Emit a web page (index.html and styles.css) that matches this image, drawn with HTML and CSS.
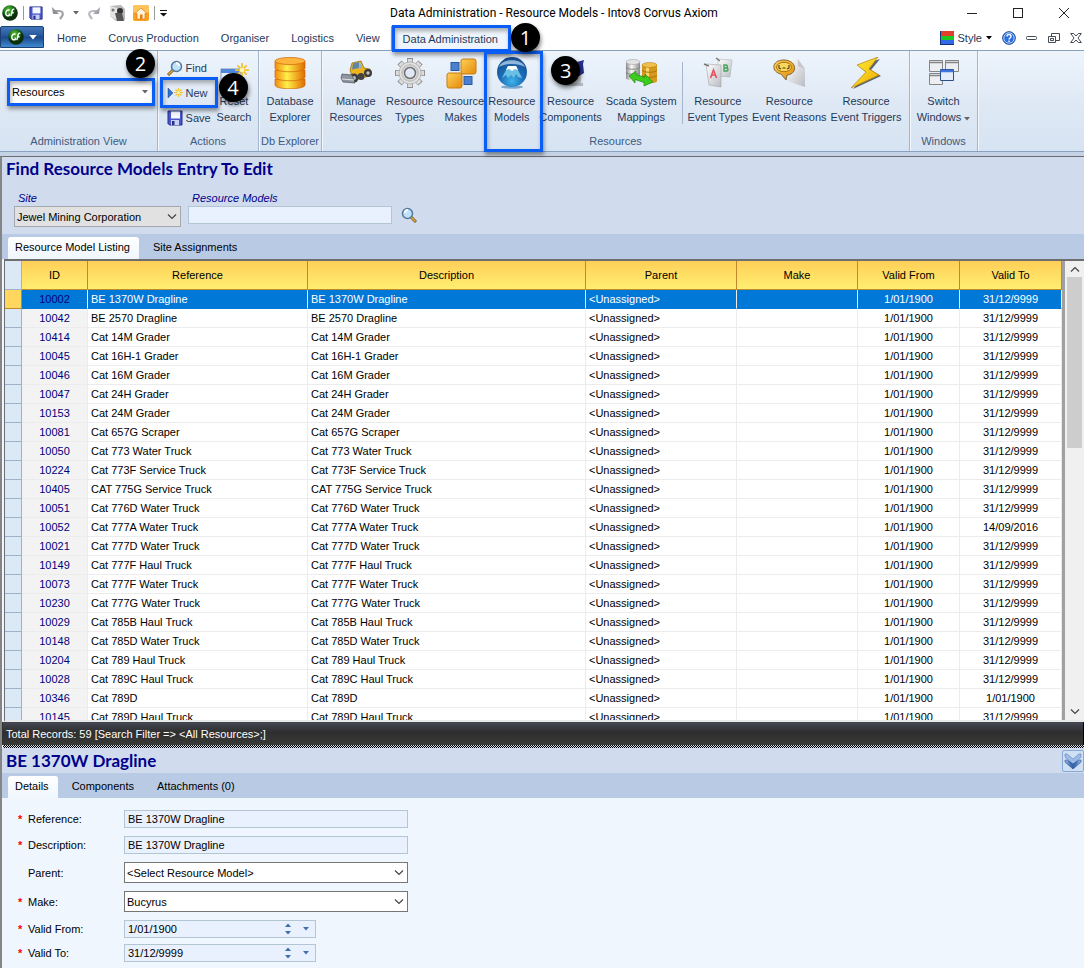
FILE: index.html
```html
<!DOCTYPE html>
<html lang="en">
<head>
    <meta charset="UTF-8">
    <meta name="viewport" content="width=device-width, initial-scale=1.0">
    <title>Data Administration - Resource Models - Intov8 Corvus Axiom</title>
    <link rel="stylesheet" href="styles.css">
</head>
<body>
    <!-- shared gradients and symbols -->
    <svg class="defs" aria-hidden="true">
        <defs>
            <radialGradient id="greenBall" cx="0.4" cy="0.3"><stop offset="0" stop-color="#6cc43c"/><stop offset="0.6" stop-color="#1c7a1c"/><stop offset="1" stop-color="#0a2e0a"/></radialGradient>
            <radialGradient id="blueBall" cx="0.5" cy="0.8" r="0.8"><stop offset="0" stop-color="#3fb4ea"/><stop offset="0.5" stop-color="#1a6bb4"/><stop offset="1" stop-color="#164a8c"/></radialGradient>
            <linearGradient id="gold" x1="0" x2="1"><stop offset="0" stop-color="#f28a10"/><stop offset="0.4" stop-color="#fff04a"/><stop offset="1" stop-color="#e06c00"/></linearGradient>
            <linearGradient id="amber" x1="0" y1="0" x2="1" y2="1"><stop offset="0" stop-color="#ffd05a"/><stop offset="1" stop-color="#e58a08"/></linearGradient>
            <linearGradient id="steel" x1="0" x2="1"><stop offset="0" stop-color="#8c8c8c"/><stop offset="0.4" stop-color="#fafafa"/><stop offset="1" stop-color="#8a8a8a"/></linearGradient>
            <linearGradient id="bolt" x1="0" y1="0" x2="1" y2="1"><stop offset="0" stop-color="#fff43a"/><stop offset="1" stop-color="#f0a800"/></linearGradient>
            <linearGradient id="paper" x1="0" y1="0" x2="1" y2="1"><stop offset="0" stop-color="#ffffff"/><stop offset="1" stop-color="#b9bcc2"/></linearGradient>
            <linearGradient id="chev" x1="0" y1="0" x2="0" y2="1"><stop offset="0" stop-color="#9dbbe6"/><stop offset="1" stop-color="#1d4a94"/></linearGradient>
        </defs>
        <symbol id="ball" viewBox="0 0 16 16">
            <circle cx="8" cy="8" r="7.8" fill="url(#greenBall)"/>
            <path d="M7.6 5.2C5.6 4.4 3.8 6 3.8 8.2c0 2 1.4 3.1 3.4 2.4V8.4M8.8 11.2l1.5-6c.3-1 1-1.2 2-.9M9.2 7.8h2.4" fill="none" stroke="#fff" stroke-width="1.4"/>
        </symbol>
        <symbol id="floppy" viewBox="0 0 16 16">
            <path d="M1 1h14v14H2.5L1 13.500z" fill="#4a58cc" stroke="#232c86"/>
            <rect x="4" y="1.500" width="9" height="7" fill="#f4f7fd"/>
            <rect x="4" y="10" width="8" height="5" fill="#c9cff0"/>
            <rect x="5" y="11" width="2.500" height="4" fill="#232c86"/>
        </symbol>
        <symbol id="lens" viewBox="0 0 16 16">
            <path d="M10 10l5 5" stroke="#7a5a20" stroke-width="3"/>
            <path d="M10 10l4.500 4.500" stroke="#e2a83c" stroke-width="1.500"/>
            <circle cx="6.500" cy="6.500" r="5" fill="#bfe2fa" stroke="#55789c" stroke-width="1.500"/>
            <path d="M4 6a3 3 0 0 1 3-3" stroke="#fff" stroke-width="2" fill="none"/>
        </symbol>
        <symbol id="spark" viewBox="0 0 12 12">
            <path d="M6 0v12M0 6h12M2 2l8 8M10 2l-8 8" stroke="#f2c230" stroke-width="1.500"/>
            <circle cx="6" cy="6" r="2" fill="#fff6b0"/>
        </symbol>
        <symbol id="caret" viewBox="0 0 10 6"><path d="M1 .5l4 4 4-4" fill="none" stroke="#444" stroke-width="1.200"/></symbol>
        <symbol id="tri" viewBox="0 0 6 4"><path d="M0 0h6L3 3.500z" fill="currentColor"/></symbol>
    </svg>

    <header class="titlebar">
        <div class="quick">
            <svg class="i16"><use href="#ball"/></svg>
            <i class="bar"></i>
            <button aria-label="Save"><svg class="i14"><use href="#floppy"/></svg></button>
            <button aria-label="Undo"><svg width="14" height="14" viewBox="0 0 14 14"><path d="M4 5h4c3 0 4.500 1.500 3.500 4.500L9 13" fill="none" stroke="#a0a2a8" stroke-width="2.200"/><path d="M1 1l1 7h6z" fill="#8e9096"/></svg></button>
            <svg class="tri grey"><use href="#tri"/></svg>
            <button aria-label="Redo"><svg width="14" height="14" viewBox="0 0 14 14"><path d="M10 5H6C3 5 1.500 6.500 2.500 9.500L5 13" fill="none" stroke="#b8babf" stroke-width="2.200"/><path d="M13 1l-1 7H6z" fill="#a2a4aa"/></svg></button>
            <button aria-label="Snapshot"><svg width="16" height="16" viewBox="0 0 16 16"><path d="M1 1l11-1 4 4v11l-9 1-6-5z" fill="#b9b9b9"/><path d="M1 1l7 2v12l-7-4z" fill="#e4e4e4"/><circle cx="11" cy="6" r="3" fill="#333"/><path d="M6 8h7l2 8H8z" fill="#555"/><circle cx="4" cy="5" r="1.500" fill="#777"/></svg></button>
            <button aria-label="Home page"><svg width="16" height="16" viewBox="0 0 16 16"><rect width="16" height="16" rx="2" fill="#f9a11b"/><rect width="16" height="8" rx="2" fill="#fcc45c"/><path d="M8 3L2 8.500h2V14h8V8.500h2z" fill="#fff3dc" stroke="#e77a10" stroke-width=".7"/><rect x="7" y="9.500" width="2.500" height="4.500" fill="#e77a10"/></svg></button>
            <i class="bar"></i>
            <svg class="more" width="8" height="7" viewBox="0 0 8 7"><path d="M0 .5h7" stroke="#111"/><path d="M0 3h7L3.500 6.500z" fill="#111"/></svg>
        </div>
        <h1 class="caption">Data Administration - Resource Models - Intov8 Corvus Axiom</h1>
        <div class="window-buttons">
            <button aria-label="Minimize"><svg width="10" height="10"><path d="M0 5.500h10" stroke="#222"/></svg></button>
            <button aria-label="Maximize"><svg width="10" height="10"><rect x=".5" y=".5" width="9" height="9" fill="none" stroke="#222"/></svg></button>
            <button aria-label="Close"><svg width="10" height="10"><path d="M0 0l10 10M10 0L0 10" stroke="#222"/></svg></button>
        </div>
    </header>

    <nav class="menubar">
        <button class="app-button" aria-label="Application menu"><svg class="i16"><use href="#ball"/></svg><svg class="app-tri"><use href="#tri"/></svg></button>
        <button class="menu">Home</button>
        <button class="menu">Corvus Production</button>
        <button class="menu">Organiser</button>
        <button class="menu">Logistics</button>
        <button class="menu">View</button>
        <button class="menu active">Data Administration<span class="callout"></span><span class="badge badge-1">1</span></button>
        <div class="menu-right">
            <button class="style-button"><svg width="14" height="14"><rect width="14" height="14" fill="#16307a"/><rect x="1" width="13" height="5" fill="#e0402c"/><rect x="1" y="5" width="13" height="4" fill="#1ec81e"/><rect x="1" y="9" width="13" height="4" fill="#2f6ae8"/></svg>Style<svg class="tri"><use href="#tri"/></svg></button>
            <button aria-label="Help"><svg width="14" height="14" viewBox="0 0 14 14"><circle cx="7" cy="7" r="6.300" fill="#2a6fe0" stroke="#123f96"/><circle cx="7" cy="7" r="5.200" fill="none" stroke="#b7d5fb"/><path d="M5 5.500c0-2.600 4-2.600 4 0C9 7 7 6.900 7 8.500M7 9.600v1.500" fill="none" stroke="#fff" stroke-width="1.400"/></svg></button>
            <button aria-label="Minimize document"><svg width="12" height="12"><rect x=".5" y="4.500" width="10" height="3" rx="1" fill="#fff" stroke="#444b55"/></svg></button>
            <button aria-label="Restore document"><svg width="12" height="12" fill="#fff" stroke="#444b55"><path d="M3.500 1.500h8v7h-8z"/><path d="M.5 4.500h7v6h-7z"/><path d="M2.500 6.500h3v2h-3z"/></svg></button>
            <button aria-label="Close document"><svg width="12" height="12" viewBox="0 0 12 12"><path d="M.7 1.500h3L6 4l2.300-2.500h3L8 6l3.300 4.500h-3L6 8l-2.300 2.500h-3L4 6z" fill="#fff" stroke="#444b55"/></svg></button>
        </div>
    </nav>

    <section class="ribbon">
        <div class="group group-view">
            <div class="group-body">
                <div class="ribbon-select">
                    <select aria-label="Administration View"><option>Resources</option></select>
                    <svg class="tri grey"><use href="#tri"/></svg>
                    <span class="callout"></span>
                    <span class="badge badge-2">2</span>
                </div>
            </div>
            <div class="group-name">Administration View</div>
        </div>
        <div class="group group-actions">
            <div class="group-body">
                <div class="small-buttons">
                    <button><svg class="i16 flip"><use href="#lens"/></svg>Find</button>
                    <button><svg width="16" height="14" viewBox="0 0 16 14"><path d="M1 2l5 5-5 5z" fill="#2f6fd0" stroke="#174a9c" stroke-width=".5"/><use href="#spark" x="7" y="2" width="9" height="9"/></svg>New<span class="callout"></span></button>
                    <button><svg class="i16"><use href="#floppy"/></svg>Save</button>
                </div>
                <button class="big">
                    <svg class="i32" viewBox="0 0 32 32"><rect x="3" y="12" width="20" height="18" fill="#e8f0fb" stroke="#8095b4"/><rect x="3" y="12" width="20" height="4" fill="#4f86dd"/><use href="#spark" x="17" y="6" width="14" height="14"/></svg>
                    Reset<br>Search
                    <span class="badge badge-4">4</span>
                </button>
            </div>
            <div class="group-name">Actions</div>
        </div>
        <div class="group group-db">
            <div class="group-body">
                <button class="big">
                    <svg class="i32" viewBox="0 0 32 32" fill="url(#gold)" stroke="#cf6408" stroke-width=".7"><path d="M1 22v6c0 5 30 5 30 0v-6z"/><path d="M1 13v7c0 5 30 5 30 0v-7z"/><path d="M1 4v7c0 5 30 5 30 0V4z"/><ellipse cx="16" cy="4" rx="15" ry="3.600" fill="#ffb43c"/></svg>
                    Database<br>Explorer
                </button>
            </div>
            <div class="group-name">Db Explorer</div>
        </div>
        <div class="group group-resources">
            <div class="group-body">
                <button class="big">
                    <svg class="i32" viewBox="0 0 32 32"><path d="M10 13l2-7 9-2 3 7 6 1v7l-17 4z" fill="#eeb420" stroke="#8a6410" stroke-width=".7"/><path d="M13 6.500l6-1.500v6l-7 1.500z" fill="#5c86a8"/><path d="M20 5l2 6-2 .5z" fill="#8cb3cf"/><circle cx="14" cy="21" r="4.500" fill="#3b3b3b"/><circle cx="14" cy="21" r="2" fill="#b9b9b9"/><circle cx="21" cy="19.500" r="3.500" fill="#444"/><circle cx="28" cy="16" r="4" fill="#3b3b3b"/><circle cx="28" cy="16" r="1.700" fill="#c4c4c4"/><path d="M2 17l10 1 3 8-12-1-2-4z" fill="#8e959e" stroke="#4c5158" stroke-width=".7"/><path d="M2 22l12 1" stroke="#dfe3e8"/></svg>
                    Manage<br>Resources
                </button>
                <button class="big">
                    <svg class="i32" viewBox="0 0 32 32"><path d="M16 1v30M1 16h30M5.500 5.500l21 21M26.500 5.500l-21 21" stroke="#8f8f8f" stroke-width="6"/><path d="M16 2v28M2 16h28M6.200 6.200l19.600 19.600M25.800 6.200L6.200 25.800" stroke="#dcdcdc" stroke-width="4.500"/><circle cx="16" cy="16" r="11" fill="#e2e2e2" stroke="#a5a5a5" stroke-width=".7"/><circle cx="16" cy="16" r="8" fill="none" stroke="#c4c4c4" stroke-width="2"/><circle cx="16" cy="16" r="5.500" fill="#dfe9f5" stroke="#6f6f6f" stroke-width="1.500"/></svg>
                    Resource<br>Types
                </button>
                <button class="big">
                    <svg class="i32" viewBox="0 0 32 32"><rect x="16" y="2" width="15" height="15" rx="2" fill="url(#amber)" stroke="#c97c0c"/><rect x="2" y="16" width="15" height="15" rx="2" fill="url(#amber)" stroke="#c97c0c"/><rect x="6" y="5.500" width="8" height="8" fill="#4a80ce" stroke="#2a5aa4"/><rect x="19" y="19.500" width="8" height="8" fill="#4a80ce" stroke="#2a5aa4"/></svg>
                    Resource<br>Makes
                </button>
                <button class="big">
                    <svg class="i32" viewBox="0 0 32 32"><ellipse cx="16" cy="30" rx="11" ry="1.700" fill="#7fa6cb"/><circle cx="16" cy="15" r="15" fill="url(#blueBall)"/><path d="M3 10C6 1 26 1 29 10c-7-4-19-4-26 0z" fill="#8fb5da"/><path d="M6 21l6-12h8l6 12-4-1-2-3-2 4-3-3-3 3-2-3z" fill="#6cbfe4"/><path d="M12 9h8l2 4-3-1-3 2-3-2-3 1z" fill="#fff"/></svg>
                    Resource<br>Models
                    <span class="callout callout-big"></span>
                </button>
                <button class="big">
                    <svg class="i32" viewBox="0 0 32 32"><path d="M4 4h22v22H8z" fill="#c8cbd2"/><path d="M22 5l7-2-1 4 1 9-5 3z" fill="#24308c"/><path d="M6 26h22v3H10z" fill="#b4b8c0"/></svg>
                    Resource<br>Components
                    <span class="badge badge-3">3</span>
                </button>
                <button class="big">
                    <svg class="i32" viewBox="0 0 32 32"><path d="M1 5v16c0 3 14 3 14 0V5z" fill="url(#steel)"/><ellipse cx="8" cy="5" rx="7" ry="2.500" fill="#e4e4e4" stroke="#999" stroke-width=".5"/><path d="M1 10c0 3 14 3 14 0M1 15c0 3 14 3 14 0" fill="none" stroke="#888"/><path d="M17 8v16c0 3 15 3 15 0V8z" fill="#d79a1c"/><path d="M21 10v16h3V10z" fill="#f8d868"/><ellipse cx="24.500" cy="8" rx="7.500" ry="2.500" fill="#f0bf4c" stroke="#a8740c" stroke-width=".5"/><path d="M17 13c0 3 15 3 15 0M17 18c0 3 15 3 15 0" fill="none" stroke="#a8740c"/><path d="M4 19l7-5v3.500l9 3V17l8 8-9 4v-3.500l-9-3V26z" fill="#3ccc1c" stroke="#1e8a0c" stroke-width=".7"/></svg>
                    Scada System<br>Mappings
                </button>
                <i class="divider"></i>
                <button class="big">
                    <svg class="i32" viewBox="0 0 32 32"><path d="M16 2l14 1-2 17-12-1z" fill="url(#paper)" stroke="#aaa" stroke-width=".5"/><path d="M4 7l15 1v22l-12-2z" fill="url(#paper)" stroke="#999" stroke-width=".5"/><path d="M2 7l5 2M14 1l4 3" stroke="#777" stroke-width="1.500"/><path d="M8.500 21l3-8 3 8M9.500 18h4" fill="none" stroke="#e8505a" stroke-width="1.600"/><path d="M22 8v6h2.500c2 0 2-3 0-3H22h2c1.800 0 1.800-3 0-3z" fill="none" stroke="#3fa45a" stroke-width="1.400"/></svg>
                    Resource<br>Event Types
                </button>
                <button class="big">
                    <svg class="i32" viewBox="0 0 32 32"><path d="M15 2h10l7 10v18L14 24z" fill="url(#paper)"/><path d="M25 2v7l7 3z" fill="#c4c7cd"/><path d="M11 3c13 0 14 14 3 15l-1 5-5-6C-2 15-2 3 11 3z" fill="url(#amber)" stroke="#7e6a3c"/><ellipse cx="11" cy="10" rx="7.500" ry="4.700" fill="#fbd660" stroke="#a87610"/><path d="M6 8v3l2 1M16 8v3l-2 1M9.500 11h3" fill="none" stroke="#53400a" stroke-width="1.200"/></svg>
                    Resource<br>Event Reasons
                </button>
                <button class="big">
                    <svg class="i32" viewBox="0 0 32 32"><path d="M30 2L9 9l8 7L3 32l28-13-10-6z" fill="#5d6673"/><path d="M28 0L7 8l9 7L1 31l28-13-10-6z" fill="url(#bolt)" stroke="#b88408" stroke-width=".7"/></svg>
                    Resource<br>Event Triggers
                </button>
            </div>
            <div class="group-name">Resources</div>
        </div>
        <div class="group group-windows">
            <div class="group-body">
                <button class="big">
                    <svg class="i32" viewBox="0 0 32 32" fill="#eceef2" stroke="#858585"><path d="M1.500 3.500h13v11h-13zM17.500 3.500h13v11h-13zM1.500 16.500h13v11h-13z"/><path d="M2 5.500h12M18 5.500h12M2 18.500h12" stroke-width="1.500"/><path d="M12.500 12.500h13v11h-13z" fill="#e3ecfa" stroke="#2c4f8c"/><path d="M12.500 14h13" stroke="#3f74e0" stroke-width="2.500"/></svg>
                    Switch<br>Windows <svg class="tri grey"><use href="#tri"/></svg>
                </button>
            </div>
            <div class="group-name">Windows</div>
        </div>
    </section>

    <main class="workspace">
        <h2 class="panel-title">Find Resource Models Entry To Edit</h2>
        <form class="search-form">
            <div class="search-field field-site">
                <label for="site">Site</label>
                <div class="combo combo-grey">
                    <select id="site"><option>Jewel Mining Corporation</option></select>
                    <svg class="caret"><use href="#caret"/></svg>
                </div>
            </div>
            <div class="search-field field-models">
                <label for="models">Resource Models</label>
                <input id="models" type="text" class="box">
            </div>
            <button type="button" class="search-button" aria-label="Search"><svg class="i16"><use href="#lens"/></svg></button>
        </form>

        <div class="tabs">
            <button class="tab active">Resource Model Listing</button>
            <button class="tab">Site Assignments</button>
        </div>

        <div class="grid">
            <div class="grid-view">
                <table>
                    <colgroup>
                        <col class="c-mark"><col class="c-id"><col class="c-ref"><col><col class="c-parent"><col class="c-make"><col class="c-date"><col class="c-date">
                    </colgroup>
                    <thead>
                        <tr><th class="mark"></th><th>ID</th><th>Reference</th><th>Description</th><th>Parent</th><th>Make</th><th>Valid From</th><th>Valid To</th></tr>
                    </thead>
                    <tbody id="rows"></tbody>
                </table>
            </div>
            <div class="scrollbar">
                <svg class="caret up"><use href="#caret"/></svg>
                <div class="track"><div class="thumb"></div></div>
                <svg class="caret"><use href="#caret"/></svg>
            </div>
        </div>

        <div class="status">Total Records: 59 [Search Filter =&gt; &lt;All Resources&gt;;]</div>
        <div class="splitter"></div>

        <div class="detail-head">
            <h2 class="panel-title">BE 1370W Dragline</h2>
            <button class="collapse" aria-label="Collapse"><svg width="18" height="18" viewBox="0 0 18 18"><path d="M1 2h2l6 5 6-5h2v3l-8 7-8-7z" fill="#9dbbe6" stroke="#5c83bc" stroke-width=".6"/><path d="M1 8h2l6 4 6-4h2v2l-8 7-8-7z" fill="url(#chev)" stroke="#2a559c" stroke-width=".6"/><path d="M3 8l6 4 6-4-6 8z" fill="#3a66ae"/></svg></button>
        </div>
        <div class="tabs">
            <button class="tab active">Details</button>
            <button class="tab">Components</button>
            <button class="tab">Attachments (0)</button>
        </div>

        <form class="details">
            <div class="row">
                <label class="required" for="reference">Reference:</label>
                <input id="reference" class="box" type="text" value="BE 1370W Dragline">
            </div>
            <div class="row">
                <label class="required" for="description">Description:</label>
                <input id="description" class="box" type="text" value="BE 1370W Dragline">
            </div>
            <div class="row">
                <label for="parent">Parent:</label>
                <div class="combo">
                    <select id="parent"><option>&lt;Select Resource Model&gt;</option></select>
                    <svg class="caret"><use href="#caret"/></svg>
                </div>
            </div>
            <div class="row">
                <label class="required" for="make">Make:</label>
                <div class="combo">
                    <select id="make"><option>Bucyrus</option></select>
                    <svg class="caret"><use href="#caret"/></svg>
                </div>
            </div>
            <div class="row row-date">
                <label class="required" for="from">Valid From:</label>
                <div class="date box">
                    <input id="from" type="text" value="1/01/1900">
                    <span class="spin"><svg class="tri up"><use href="#tri"/></svg><svg class="tri"><use href="#tri"/></svg></span>
                    <svg class="tri"><use href="#tri"/></svg>
                </div>
            </div>
            <div class="row row-date">
                <label class="required" for="to">Valid To:</label>
                <div class="date box">
                    <input id="to" type="text" value="31/12/9999">
                    <span class="spin"><svg class="tri up"><use href="#tri"/></svg><svg class="tri"><use href="#tri"/></svg></span>
                    <svg class="tri"><use href="#tri"/></svg>
                </div>
            </div>
        </form>
    </main>

    <script>
        const models = [
            [10002, "BE 1370W Dragline"],
            [10042, "BE 2570 Dragline"],
            [10414, "Cat 14M Grader"],
            [10045, "Cat 16H-1 Grader"],
            [10046, "Cat 16M Grader"],
            [10047, "Cat 24H Grader"],
            [10153, "Cat 24M Grader"],
            [10081, "Cat 657G Scraper"],
            [10050, "Cat 773 Water Truck"],
            [10224, "Cat 773F Service Truck"],
            [10405, "CAT 775G Service Truck"],
            [10051, "Cat 776D Water Truck"],
            [10052, "Cat 777A Water Truck", "14/09/2016"],
            [10021, "Cat 777D Water Truck"],
            [10149, "Cat 777F Haul Truck"],
            [10073, "Cat 777F Water Truck"],
            [10230, "Cat 777G Water Truck"],
            [10029, "Cat 785B Haul Truck"],
            [10148, "Cat 785D Water Truck"],
            [10204, "Cat 789 Haul Truck"],
            [10028, "Cat 789C Haul Truck"],
            [10346, "Cat 789D", "1/01/1900"],
            [10145, "Cat 789D Haul Truck"]
        ];
        const body = document.getElementById("rows");
        models.forEach(([id, name, validTo], index) => {
            const row = body.insertRow();
            if (index === 0) row.className = "selected";
            ["", id, name, name, "<Unassigned>", "", "1/01/1900", validTo || "31/12/9999"].forEach(value => {
                row.insertCell().textContent = value;
            });
        });
    </script>
</body>
</html>
```

FILE: styles.css
```css
* {
    margin: 0;
    padding: 0;
    box-sizing: border-box;
}
body {
    display: flex;
    flex-direction: column;
    height: 100vh;
    overflow: hidden;
    background: #fff;
    color: #000;
    font-family: "Liberation Sans", Arial, sans-serif;
    font-size: 11px;
    line-height: 16px;
}
button, input, select {
    font: inherit;
    color: inherit;
    background: none;
    border: none;
    border-radius: 0;
}
select {
    appearance: none;
    width: 100%;
}
svg {
    flex: none;
}
.defs {
    position: absolute;
    width: 0;
    height: 0;
}
.i14 { width: 14px; height: 14px; }
.i16 { width: 16px; height: 16px; }
.i32 { width: 32px; height: 32px; }
.flip { transform: scaleX(-1); }
.up { transform: scaleY(-1); }
.tri {
    width: 6px;
    height: 4px;
}
.grey { color: #666; }
.caret {
    width: 10px;
    height: 6px;
}

/* title bar */
.titlebar {
    display: grid;
    grid-template-columns: 1fr auto 1fr;
    align-items: center;
    height: 26px;
}
.quick {
    display: flex;
    align-items: center;
    gap: 8px;
    padding-left: 2px;
}
.quick button {
    display: flex;
}
.quick .bar {
    width: 1px;
    height: 14px;
    margin: 0 -3px;
    background: #999;
}
.caption {
    padding-left: 24px;
    font: 12px/16px Roboto, sans-serif;
}
.window-buttons {
    display: flex;
    justify-content: flex-end;
    gap: 36px;
    padding-right: 15px;
}
.window-buttons button {
    display: flex;
}

/* menu tabs */
.menubar, .ribbon {
    color: #1e395b;
}
.menubar {
    display: flex;
    height: 24px;
}
.app-button {
    display: flex;
    align-items: center;
    justify-content: center;
    gap: 5px;
    width: 44px;
    height: 22px;
    margin-right: 2px;
    border: 1px solid #1c3f75;
    border-radius: 2px 2px 0 0;
    background: linear-gradient(#4277b8, #25569b 45%, #1b478a 50%, #3f8ad0);
    color: #fff;
}
.app-tri {
    width: 8px;
    height: 5px;
}
.menu {
    position: relative;
    padding: 0 11px;
    white-space: nowrap;
}
.menu.active {
    border: 1px solid #8ba0bc;
    border-bottom: none;
    background: #eff5fc;
}
.menu-right {
    display: flex;
    align-items: center;
    gap: 10px;
    margin-left: auto;
    padding-right: 2px;
}
.menu-right button {
    display: flex;
    align-items: center;
    gap: 4px;
}
.style-button .tri {
    color: #000;
}

/* numbered highlights over the ribbon */
.callout {
    position: absolute;
    z-index: 2;
    inset: -3px;
    border: 3px solid #0a5df5;
    box-shadow: 1px 3px 4px rgba(0, 0, 0, 0.4), inset 1px 3px 4px rgba(0, 0, 0, 0.3);
}
.menu .callout {
    inset: -2px -2px -2px 0;
}
.badge {
    position: absolute;
    z-index: 3;
    width: 29px;
    height: 29px;
    border-radius: 50%;
    background: #000;
    color: #fff;
    font: 20px/29px "Open Sans", sans-serif;
    text-align: center;
    box-shadow: 1px 3px 4px rgba(0, 0, 0, 0.5);
}
.badge-1 { top: -4px; right: -31px; }
.badge-2 { top: -32px; right: -3px; }
.badge-3 { top: 1px; left: 14px; }
.badge-4 { top: 18px; left: 4px; }

/* ribbon */
.ribbon {
    display: flex;
    height: 102px;
    border-top: 1px solid #8ba0bc;
    border-bottom: 1px solid #8ba0bc;
    background: linear-gradient(#edf4fc, #dfe9f5 50%, #d6e3f2);
}
.group {
    display: flex;
    flex-direction: column;
    border-right: 1px solid #a5b6cc;
    box-shadow: 1px 0 0 #f4f8fd;
}
.group-body {
    display: flex;
    flex: 1;
    justify-content: center;
    padding-top: 4px;
}
.group-name {
    height: 18px;
    text-align: center;
    color: #3e5a80;
}
.group-view { width: 158px; }
.group-actions { width: 101px; }
.group-db { width: 63px; }
.group-resources { width: 588px; }
.group-windows { width: 68px; }
.big {
    position: relative;
    padding: 2px 2px 0;
    text-align: center;
    white-space: nowrap;
    align-self: flex-start;
}
.big .i32 {
    display: block;
    margin: 0 auto 4px;
}
.ribbon-select {
    position: relative;
    align-self: flex-start;
    width: 142px;
    height: 22px;
    margin: 26px 0 0 5px;
    background: #fff;
}
.ribbon-select select {
    height: 22px;
    padding-left: 2px;
    color: #000;
}
.ribbon-select .tri {
    position: absolute;
    top: 9px;
    right: 4px;
}
.small-buttons {
    display: flex;
    flex-direction: column;
    width: 52px;
}
.small-buttons button {
    position: relative;
    display: flex;
    align-items: center;
    gap: 3px;
    height: 25px;
    padding-left: 4px;
}
.callout-big {
    inset: -4px -6px -27px -2px;
}
.divider {
    width: 1px;
    height: 62px;
    margin: 7px 3px 0;
    background: #a5b6cc;
}

/* work area */
.workspace {
    display: flex;
    flex: 1;
    flex-direction: column;
    min-height: 0;
    margin-top: 4px;
    border-top: 1px solid #6e6e6e;
    border-left: 2px solid #858585;
    background: #eff6fe;
    box-shadow: 0 -4px 0 #c3d2e4;
}
.panel-title {
    padding: 0 4px;
    background: #d0dcee;
    color: #00008b;
    font: bold 17px/24px Lato, sans-serif;
}
.search-form {
    display: flex;
    align-items: flex-start;
    gap: 7px;
    height: 53px;
    padding: 9px 12px 0;
    background: #d0dcee;
}
.search-field label {
    display: block;
    padding-left: 4px;
    color: #00008b;
    font-style: italic;
}
.field-site { width: 167px; }
.field-models { width: 204px; }
.box {
    display: block;
    width: 100%;
    height: 18px;
    padding: 0 3px;
    border: 1px solid #b2c5d3;
    background: #e9f0fe;
}
.combo {
    position: relative;
    width: 100%;
    height: 21px;
    border: 1px solid #767676;
    background: #fff;
}
.combo select {
    height: 19px;
    padding-left: 2px;
}
.combo .caret {
    position: absolute;
    top: 7px;
    right: 3px;
}
.combo-grey {
    border-color: #a5a8ac;
    background: #e1e1e1;
}
.search-button {
    margin-top: 17px;
    padding-left: 2px;
}

/* tab strips */
.tabs {
    display: flex;
    height: 25px;
    padding: 3px 6px 0;
    background: #b9cbe4;
}
.tab {
    padding: 0 9px 3px 7px;
    margin-right: 7px;
    white-space: nowrap;
}
.tab.active {
    border-radius: 3px 3px 0 0;
    background: linear-gradient(#fff, #eff6fe);
}

/* listing */
.grid {
    display: flex;
    flex: 1;
    min-height: 0;
    margin-left: 2px;
    border-top: 2px solid #6e6e6e;
    border-left: 1px solid #6e6e6e;
    border-bottom: 2px solid #e8e8e8;
}
.grid-view {
    flex: 1;
    overflow: hidden;
    border-right: 3px solid #a0a0a0;
    background: #fff;
}
.grid table {
    width: 100%;
    border-collapse: separate;
    border-spacing: 0;
    table-layout: fixed;
}
.c-mark { width: 17px; }
.c-id { width: 66px; }
.c-ref { width: 220px; }
.c-parent { width: 151px; }
.c-make { width: 121px; }
.c-date { width: 102px; }
.grid th {
    height: 29px;
    border-right: 1px solid #c08a2a;
    border-bottom: 1px solid #c08a2a;
    background: linear-gradient(#fecf58, #ffee70);
    font-weight: normal;
}
.grid td {
    height: 19px;
    padding: 0 3px;
    border-right: 1px solid #ececec;
    border-bottom: 1px solid #ececec;
    line-height: 18px;
    white-space: nowrap;
}
.grid td:nth-child(2) {
    background: #f3f3f3;
    color: #00007b;
    text-align: center;
}
.grid td:nth-child(n+7) {
    text-align: center;
}
.grid td:first-child, .grid th.mark {
    border-right: 1px solid #9eb2cc;
    border-bottom: 1px solid #9eb2cc;
    background: #dbe8f5;
}
.grid .selected td {
    background: #0078d7;
    border-bottom-color: #0078d7;
    color: #fff;
}
.grid .selected td:nth-child(2) {
    border-right-color: #fff;
    color: #00007b;
}
.grid .selected td:first-child {
    background: #ffd75e;
    border-color: #c08a2a;
}
.scrollbar {
    display: flex;
    flex-direction: column;
    align-items: center;
    width: 19px;
    padding: 5px 0;
    background: #f0f0f0;
}
.track {
    flex: 1;
    width: 15px;
    margin: 5px 0;
}
.thumb {
    height: 40%;
    background: #cdcdcd;
}

.status {
    height: 23px;
    padding: 4px 3px 0;
    border-left: 1px solid #333;
    border-right: 1px solid #000;
    background: linear-gradient(#444854, #2e2e2e 45%, #3a3a38);
    color: #fff;
}
.splitter {
    height: 3px;
    margin-left: 1px;
    background: repeating-conic-gradient(#000 0 25%, #d0dcee 0 50%) 0 0 / 2px 2px;
}

/* details */
.detail-head {
    display: flex;
    align-items: center;
    justify-content: space-between;
    height: 25px;
    background: #d0dcee;
}
.collapse {
    display: flex;
    padding: 1px;
    border: 1px solid #86a9d6;
    border-radius: 2px;
    background: #cfe0f5;
}
.details {
    padding: 12px 0 6px 16px;
}
.row {
    display: flex;
    align-items: center;
    width: 390px;
    margin-bottom: 8px;
}
.row label {
    flex: none;
    width: 106px;
    padding-left: 10px;
}
.row label.required {
    padding-left: 0;
}
.required::before {
    content: "*";
    display: inline-block;
    width: 10px;
    color: #f00;
    font-weight: bold;
}
.row-date {
    margin-bottom: 6px;
}
.date {
    display: flex;
    align-items: center;
    gap: 12px;
    width: 192px;
    padding-right: 6px;
    color: #3f6faf;
}
.date input {
    flex: 1;
    min-width: 0;
    color: #000;
}
.spin {
    display: flex;
    flex-direction: column;
    gap: 4px;
}
.details .row-date:last-child {
    margin-bottom: 0;
}
```
